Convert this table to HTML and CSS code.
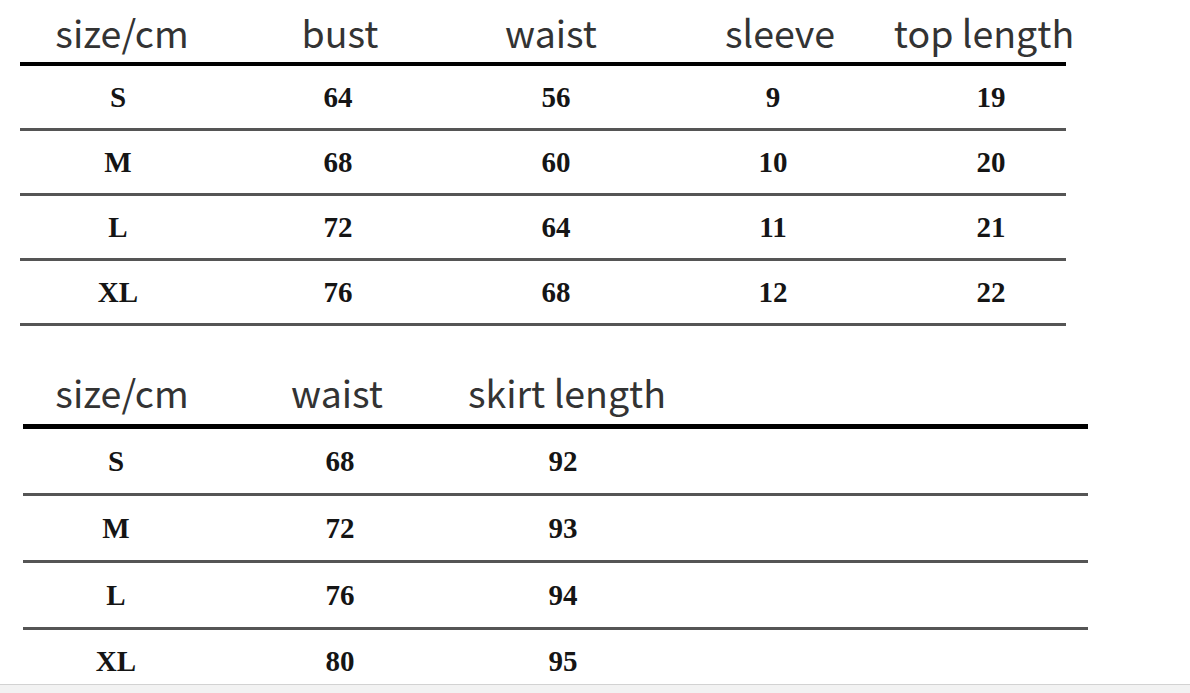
FILE: index.html
```html
<!DOCTYPE html>
<html lang="en">
<head>
<meta charset="utf-8">
<title>Size chart</title>
<link rel="stylesheet" href="styles.css">
</head>
<body>
  <section class="chart chart-top">
    <div class="head">
      <span>size/cm</span><span>bust</span><span>waist</span><span>sleeve</span><span>top length</span>
    </div>
    <div class="row"><span>S</span><span>64</span><span>56</span><span>9</span><span>19</span></div>
    <div class="row"><span>M</span><span>68</span><span>60</span><span>10</span><span>20</span></div>
    <div class="row"><span>L</span><span>72</span><span>64</span><span>11</span><span>21</span></div>
    <div class="row"><span>XL</span><span>76</span><span>68</span><span>12</span><span>22</span></div>
  </section>
  <section class="chart chart-bottom">
    <div class="head">
      <span>size/cm</span><span>waist</span><span>skirt length</span>
    </div>
    <div class="row"><span>S</span><span>68</span><span>92</span></div>
    <div class="row"><span>M</span><span>72</span><span>93</span></div>
    <div class="row"><span>L</span><span>76</span><span>94</span></div>
    <div class="row row-last"><span>XL</span><span>80</span><span>95</span></div>
  </section>
  <footer class="band"></footer>
</body>
</html>
```
FILE: styles.css
```css
html, body {
  margin: 0;
  padding: 0;
}
body {
  background: #fff;
  width: 1190px;
  height: 693px;
  overflow: hidden;
  display: flex;
  flex-direction: column;
}
.chart {
  display: flex;
  flex-direction: column;
  flex-shrink: 0;
}
.chart > div {
  flex-shrink: 0;
}
.head {
  display: grid;
  align-items: end;
  justify-items: center;
  font-family: "Noto Sans CJK SC", "Noto Sans", sans-serif;
  font-size: 37.5px;
  line-height: 40px;
  color: #333;
  white-space: nowrap;
}
.row {
  display: grid;
  align-items: center;
  justify-items: center;
  font-family: "Liberation Serif", serif;
  font-weight: bold;
  font-size: 29px;
  color: #151515;
  border-bottom: 3px solid #555;
}

/* top table */
.chart-top {
  margin-left: 20px;
  width: 1046px;
}
.chart-top .head {
  height: 66px;
  box-sizing: border-box;
  padding-bottom: 10px;
  border-bottom: 4px solid #000;
  grid-template-columns: 204px 232px 190px 268px 140px;
}
.chart-top .row {
  height: 62px;
  grid-template-columns: 196px 244px 192px 242px 172px;
}
.chart-top .row span:last-child {
  padding-left: 22px;
}

/* bottom table */
.chart-bottom {
  margin-left: 23px;
  width: 1065px;
}
.chart-bottom .head {
  height: 103px;
  box-sizing: border-box;
  padding-bottom: 12px;
  border-bottom: 5px solid #000;
  grid-template-columns: 198px 232px 228px 1fr;
}
.chart-bottom .row {
  height: 64px;
  grid-template-columns: 186px 262px 184px 1fr;
}
.chart-bottom .row-last {
  height: 54px;
  box-sizing: border-box;
  padding-top: 8px;
  border-bottom: none;
}

.band {
  flex-shrink: 0;
  height: 9px;
  box-sizing: border-box;
  border-top: 1px solid #d2d2d2;
  background: #f2f2f2;
}
```
